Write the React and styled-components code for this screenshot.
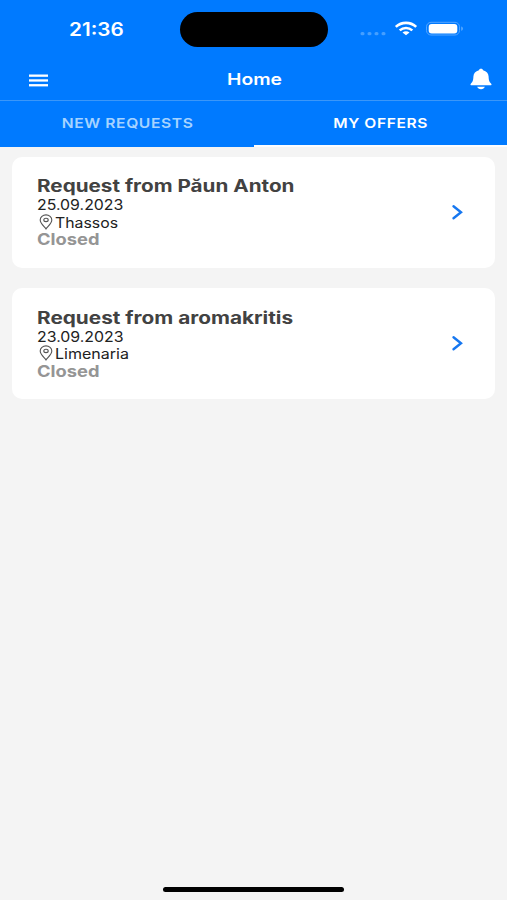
import React from 'react'
import styled, { createGlobalStyle } from 'styled-components'

const GlobalStyle = createGlobalStyle`
  * {
    box-sizing: border-box;
  }

  body {
    margin: 0;
    background: #f4f4f4;
    font-family: Inter, 'Liberation Sans', sans-serif;
  }
`

const Screen = styled.div`
  display: flex;
  flex-direction: column;
  height: 900px;
  overflow: hidden;
  background: #f4f4f4;
`

const Wide = styled.span`
  display: inline-block;
  white-space: nowrap;
  transform: scaleX(${(props) => props.$stretch || 1.2});
  transform-origin: ${(props) => props.$origin || 'left'} center;
`

const Header = styled.header`
  background: #007aff;
  color: white;
`

const StatusBar = styled.div`
  display: grid;
  grid-template-columns: 180px 148px 1fr;
  height: 59px;
`

const Time = styled.div`
  padding-left: 68.5px;
  font-size: 18px;
  font-weight: 600;
  line-height: 59px;
`

const Island = styled.div`
  height: 35px;
  margin-top: 12px;
  border-radius: 18px;
  background: black;
`

const StatusIcons = styled.div`
  display: flex;
  align-items: flex-start;
  padding: 20px 0 0 32px;

  svg {
    display: block;
  }
`

const NavBar = styled.div`
  display: grid;
  grid-template-columns: 80px 1fr 80px;
  align-items: center;
  height: 42px;
  padding-bottom: 1px;
  border-bottom: 1px solid #3b97f9;
`

const NavTitle = styled.div`
  padding-left: 1px;
  font-size: 16.5px;
  font-weight: 600;
  text-align: center;
`

const IconButton = styled.button`
  display: flex;
  justify-content: ${(props) => (props.$right ? 'flex-end' : 'flex-start')};
  padding: ${(props) => (props.$right ? '0 15px 0 0' : '2px 0 0 29px')};
  border: 0;
  background: none;
  color: white;
`

const Tabs = styled.div`
  display: grid;
  grid-template-columns: 254px 1fr;
  height: 45.5px;
`

const Tab = styled.div`
  height: 45.5px;
  padding-left: ${(props) => (props.$active ? 0 : 2)}px;
  border-bottom: 2px solid ${(props) => (props.$active ? '#fcfdff' : '#007aff')};
  color: ${(props) => (props.$active ? 'white' : '#a6d3ff')};
  font-size: 13.7px;
  font-weight: 600;
  letter-spacing: 0.5px;
  line-height: 45px;
  text-align: center;
`

const List = styled.main`
  display: flex;
  flex: 1;
  flex-direction: column;
  gap: 20px;
  padding: 10px 12px 0;
`

const Card = styled.article`
  display: flex;
  align-items: center;
  justify-content: space-between;
  height: 111.4px;
  padding: 0 32.5px 0 25px;
  border-radius: 10px;
  background: white;
`

const CardText = styled.div`
  padding-top: 1px;
`

const CardTitle = styled.h2`
  margin: 0;
  color: #424242;
  font-size: 17px;
  font-weight: 700;
  line-height: 20px;
`

const CardLine = styled.div`
  display: flex;
  align-items: center;
  height: 17.5px;
  color: #222;
  font-size: 14.2px;
  line-height: 17.5px;
`

const Status = styled.div`
  color: #959595;
  font-size: 16px;
  font-weight: 700;
  line-height: 17.5px;
`

const PinIcon = styled.svg`
  flex: none;
  width: 14px;
  height: 16px;
  margin: -2px 2.5px 0 1.5px;
`

const HomeBar = styled.div`
  width: 181px;
  height: 5px;
  margin: 0 auto 8px;
  border-radius: 3px;
  background: black;
`

const requests = [
  { id: 1, from: 'Păun Anton', date: '25.09.2023', place: 'Thassos', status: 'Closed', titleStretch: 1.216, placeStretch: 1.115 },
  { id: 2, from: 'aromakritis', date: '23.09.2023', place: 'Limenaria', status: 'Closed', titleStretch: 1.222, placeStretch: 1.13 },
]

const RequestCard = ({ request }) => {
  return (
    <Card>
      <CardText>
        <CardTitle>
          <Wide $stretch={request.titleStretch}>Request from {request.from}</Wide>
        </CardTitle>
        <CardLine>
          <Wide $stretch={1.12}>{request.date}</Wide>
        </CardLine>
        <CardLine>
          <PinIcon viewBox='0 0 14 16' fill='none' stroke='#555' strokeWidth='1.1'>
            <path d='M7 15C5.2 12.5 1.2 9.5 1.2 6.1a5.8 5.2 0 0 1 11.6 0C12.8 9.5 8.800 12.500 7 15Z' />
            <ellipse cx='7' cy='5.900' rx='2.200' ry='1.700' />
          </PinIcon>
          <Wide $stretch={request.placeStretch}>{request.place}</Wide>
        </CardLine>
        <Status>
          <Wide $stretch={1.145}>{request.status}</Wide>
        </Status>
      </CardText>
      <svg width='12' height='17' viewBox='0 0 12 17' fill='none' stroke='#1677f0' strokeWidth='2.4'>
        <path d='M2.500 2.300 10 8.300 2.500 14.300' strokeLinecap='round' />
      </svg>
    </Card>
  )
}

const App = () => {
  return (
    <Screen>
      <GlobalStyle />
      <Header>
        <StatusBar>
          <Time>
            <Wide $stretch={1.15}>21:36</Wide>
          </Time>
          <Island />
          <StatusIcons>
            <svg width='104' height='18' viewBox='0 0 104 18' fill='none'>
              <g fill='#459fff'>
                <rect x='0.500' y='12' width='4' height='3.300' rx='1.500' />
                <rect x='7.500' y='12' width='4' height='3.300' rx='1.500' />
                <rect x='14.500' y='12' width='4' height='3.300' rx='1.500' />
                <rect x='21.500' y='12' width='4' height='3.300' rx='1.500' />
              </g>
              <g stroke='white' strokeWidth='2.600'>
                <path d='M35.800 6.900C41.600 1.500 50.400 1.500 56.200 6.900' />
                <path d='M39.700 10.400C43.300 7.200 48.700 7.200 52.300 10.400' />
              </g>
              <path d='M42.500 12.500C44.500 10.900 47.500 10.900 49.500 12.500L46 15.300Z' fill='white' />
              <rect x='66.500' y='2.300' width='33' height='12.700' rx='4.500' stroke='#55a6ff' />
              <rect x='68.700' y='4.100' width='28.600' height='9.400' rx='3' fill='white' />
              <path d='M101.300 6.500C103.300 7 103.300 10.200 101.300 10.700Z' fill='#68b1ff' />
            </svg>
          </StatusIcons>
        </StatusBar>
        <NavBar>
          <IconButton aria-label='Menu'>
            <svg width='19' height='13' viewBox='0 0 19 13' fill='white'>
              <rect y='0.500' width='19' height='2.300' />
              <rect y='5.300' width='19' height='2.300' />
              <rect y='10.100' width='19' height='2.300' />
            </svg>
          </IconButton>
          <NavTitle>
            <Wide $stretch={1.17} $origin='center'>Home</Wide>
          </NavTitle>
          <IconButton $right aria-label='Notifications'>
            <svg width='22' height='22' viewBox='0 0 22 22' fill='white'>
              <path d='M11 0.800C12.300 0.800 12.900 1.500 13.100 2.300C16.500 3.100 18.400 5.500 18.600 8.500C18.800 12.500 19.200 13.800 21 15.400C22 16.300 21.600 17.300 20.300 17.300H1.700C0.400 17.300 0 16.300 1 15.400C2.800 13.800 3.200 12.500 3.400 8.500C3.600 5.500 5.500 3.100 8.900 2.300C9.100 1.500 9.700 0.800 11 0.800Z' />
              <path d='M7.200 18.800H14.800C14.300 20.300 13 21.200 11 21.200S7.700 20.300 7.200 18.800Z' />
            </svg>
          </IconButton>
        </NavBar>
        <Tabs>
          <Tab>
            <Wide $stretch={1.145} $origin='center'>NEW REQUESTS</Wide>
          </Tab>
          <Tab $active>
            <Wide $stretch={1.14} $origin='center'>MY OFFERS</Wide>
          </Tab>
        </Tabs>
      </Header>
      <List>
        {requests.map((request) => (
          <RequestCard key={request.id} request={request} />
        ))}
      </List>
      <HomeBar />
    </Screen>
  )
}

export default App
